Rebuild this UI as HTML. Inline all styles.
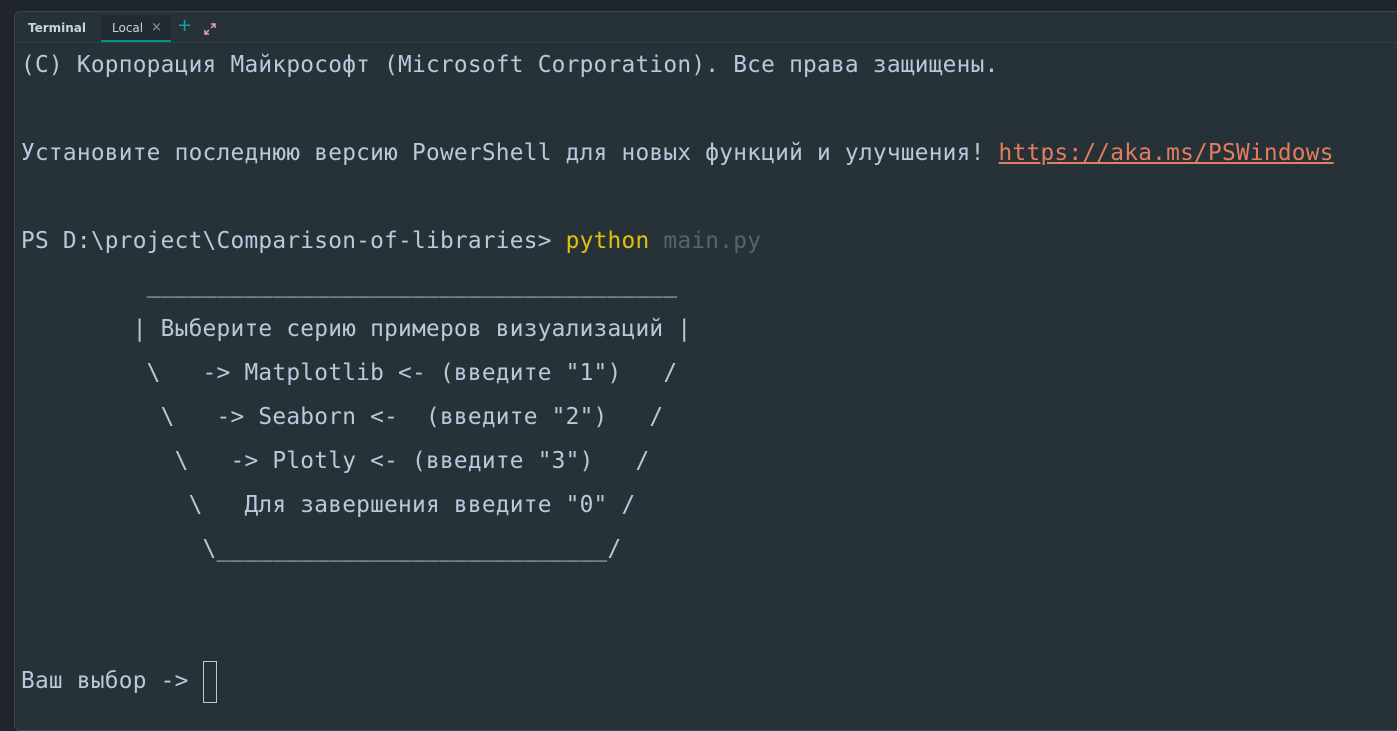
<!DOCTYPE html>
<html><head><meta charset="utf-8"><style>
html,body{margin:0;padding:0;width:1397px;height:719px;overflow:hidden;background:#1f252a;}
.panel{position:absolute;left:14px;top:11px;width:1400px;height:720px;background:#263238;border:1px solid #3a454c;border-radius:6px;box-sizing:border-box;}
.tabs{position:absolute;left:0;top:0;right:0;height:30px;border-bottom:1px solid #303b42;font-family:"DejaVu Sans",sans-serif;font-size:12px;color:#c9d3dc;}
.t1{position:absolute;left:13px;top:9px;font-weight:bold;}
.t2{position:absolute;left:86px;top:3px;width:70px;height:27px;background:#222b31;border-bottom:2px solid #009688;box-sizing:border-box;}
.t2 span{position:absolute;left:11px;top:6px;}
.t2 i{position:absolute;left:50px;top:5px;font-style:normal;color:#8a959e;font-size:13px;}
.plus{position:absolute;left:162px;top:3px;color:#16a3a5;font-size:18px;}
pre{position:absolute;left:21px;top:43px;margin:0;font-family:"DejaVu Sans Mono",monospace;font-size:22.8px;letter-spacing:0.24px;line-height:44px;color:#b9c9dc;}
.y{color:#e2c208}.g{color:#526571}.l{color:#e47c5e;text-decoration:underline}
.cur{display:inline-block;width:14px;height:42px;border:1px solid #b9c9dc;vertical-align:middle;box-sizing:border-box;}
</style></head><body>
<div class="panel">
<div class="tabs"><span class="t1">Terminal</span><div class="t2"><span>Local</span><i>×</i></div><span class="plus">+</span>
<svg style="position:absolute;left:188px;top:10px" width="14" height="14" viewBox="0 0 14 14"><path d="M8 2h4v4M12 2L8 6M6 12H2V8M2 12l4-4" stroke="#e59bb8" stroke-width="1.5" fill="none"/></svg></div>
</div>
<pre>(C) Корпорация Майкрософт (Microsoft Corporation). Все права защищены.

Установите последнюю версию PowerShell для новых функций и улучшения! <span class="l">https://aka.ms/PSWindows</span>

PS D:\project\Comparison-of-libraries&gt; <span class="y">python</span> <span class="g">main.py</span>
         ______________________________________
        | Выберите серию примеров визуализаций |
         \   -&gt; Matplotlib &lt;- (введите "1")   /
          \   -&gt; Seaborn &lt;-  (введите "2")   /
           \   -&gt; Plotly &lt;- (введите "3")   /
            \   Для завершения введите "0" /
             \____________________________/


Ваш выбор -&gt; <span class="cur"></span></pre>
</body></html>
